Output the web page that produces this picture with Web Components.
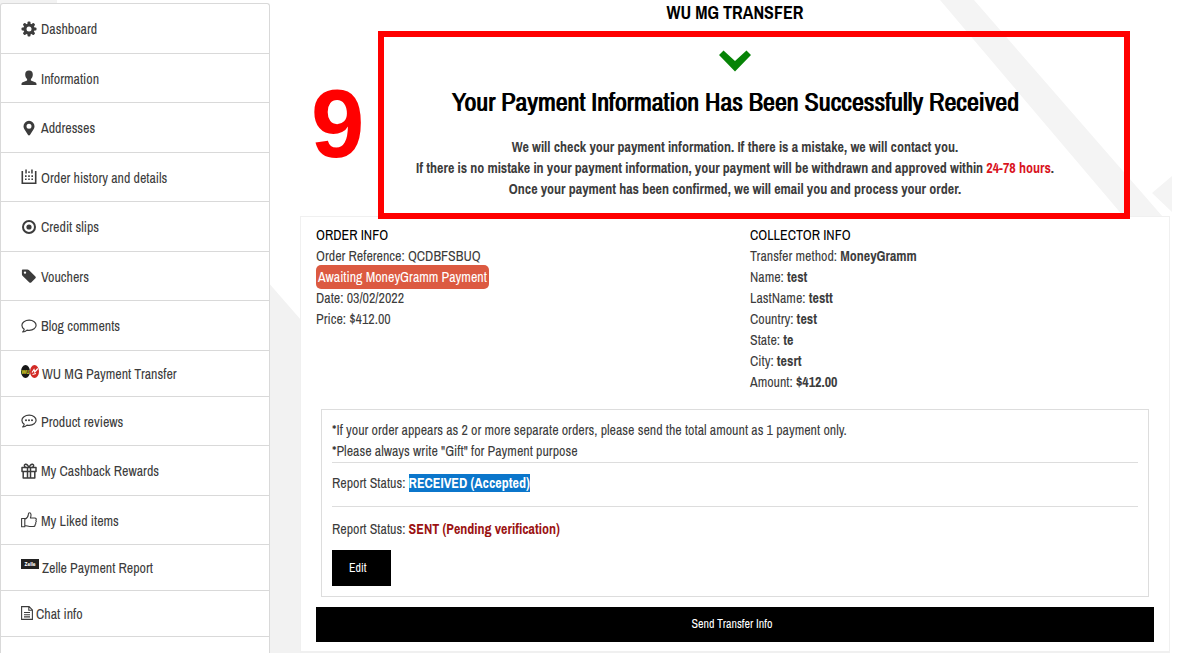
<!DOCTYPE html>
<html lang="en">
<head>
<meta charset="utf-8">
<title>WU MG Transfer</title>
<style>
  html { background: #fff; }
  body {
    margin: 0;
    font: 14px/21px "Archivo Narrow", "Liberation Sans Narrow", "Arial Narrow", "Liberation Sans", sans-serif;
    color: #3c3c3c;
  }
</style>
</head>
<body>
<account-page>
  <account-menu slot="menu">
    <menu-item icon="gear" tall>Dashboard</menu-item>
    <menu-item icon="user">Information</menu-item>
    <menu-item icon="pin" tall>Addresses</menu-item>
    <menu-item icon="calendar">Order history and details</menu-item>
    <menu-item icon="target" tall>Credit slips</menu-item>
    <menu-item icon="tag">Vouchers</menu-item>
    <menu-item icon="bubble" tall>Blog comments</menu-item>
    <menu-item icon="wumg" compact>WU MG Payment Transfer</menu-item>
    <menu-item icon="review">Product reviews</menu-item>
    <menu-item icon="gift" tall>My Cashback Rewards</menu-item>
    <menu-item icon="thumb">My Liked items</menu-item>
    <menu-item icon="zelle" compact>Zelle Payment Report</menu-item>
    <menu-item icon="doc" compact>Chat info</menu-item>
  </account-menu>
  <success-notice step="9">
    <span slot="title">WU MG TRANSFER</span>
    <span slot="heading">Your Payment Information Has Been Successfully Received</span>
  </success-notice>
  <order-panel></order-panel>
</account-page>

<script>
const define = (name, html, setup) => {
  const template = document.createElement('template');
  template.innerHTML = html;
  customElements.define(name, class extends HTMLElement {
    constructor() {
      super();
      this.attachShadow({ mode: 'open' }).append(template.content.cloneNode(true));
    }
    connectedCallback() { if (setup) setup(this, this.shadowRoot); }
  });
};

const teeth = [0, 45, 90, 135].map(a => `<rect x="6.500" y=".5" width="3" height="15" rx="1" transform="rotate(${a} 8 8)"/>`).join('');
const icons = {
  gear: [16, 16, `<mask id="m"><rect width="16" height="16" fill="#fff"/><circle cx="8" cy="8" r="2.500" fill="#000"/></mask><g fill="currentColor" mask="url(#m)"><circle cx="8" cy="8" r="5.600"/>${teeth}</g>`],
  user: [16, 16, `<path fill="currentColor" d="M8 .5c2.500 0 3.800 1.600 3.800 3.900 0 2-.8 3.700-1.900 4.700v1.500l4.300 1.700c.9.400 1.300 1 1.300 1.900V15H.5v-.8c0-.9.400-1.500 1.300-1.900l4.300-1.700V9.100C5 8.100 4.200 6.400 4.200 4.400 4.200 2.100 5.500.5 8 .5z"/>`],
  pin: [16, 16, `<path fill="currentColor" fill-rule="evenodd" d="M8 .8a5.500 5.500 0 0 0-5.500 5.500c0 1 .2 1.700.6 2.500l3.800 6c.5.900 1.700.9 2.200 0l3.800-6c.4-.8.6-1.500.6-2.500A5.500 5.500 0 0 0 8 .8zm0 3a2.500 2.500 0 1 1 0 5 2.500 2.500 0 0 1 0-5z"/>`],
  calendar: [16, 16, `<g fill="currentColor"><path d="M.5 2h1.600v11.400h11.800V2h1.600v13H.5z"/><path d="M4.300.5h1.500v4H4.300zM10.200.5h1.500v4h-1.500z"/><path d="M7 2.500h2v1.300H7zM4 6.300h1.600v1.600H4zM7.200 6.300h1.600v1.600H7.200zM10.400 6.300H12v1.600h-1.600zM4 9.500h1.600v1.600H4zM7.200 9.500h1.600v1.600H7.200zM10.400 9.500H12v1.600h-1.600z"/></g>`],
  target: [16, 16, `<circle cx="8" cy="8" r="6" fill="none" stroke="currentColor" stroke-width="2"/><circle cx="8" cy="8" r="2.600" fill="currentColor"/>`],
  tag: [16, 16, `<path fill="currentColor" fill-rule="evenodd" d="M1.700 1.500h4.700c.6 0 1.200.3 1.700.7l6.300 6.200c.5.500.5 1.300 0 1.800l-4.200 4.200c-.5.500-1.300.5-1.800 0L1.700 8C1.200 7.500.9 7 .9 6.300v-4c0-.5.300-.8.800-.8zM4 3.400a1.200 1.200 0 1 0 0 2.400 1.200 1.200 0 0 0 0-2.400z"/>`],
  bubble: [16, 16, `<path fill="none" stroke="currentColor" stroke-width="1.200" stroke-linejoin="round" d="M8.200 2.200c4 0 6.900 2.200 6.900 5s-2.900 5.100-6.900 5.100c-.8 0-1.500-.1-2.200-.2-1.200 1.100-2.500 1.700-4.300 1.900.9-.9 1.400-1.700 1.500-2.800C1.700 10.200.9 8.800.9 7.200c0-2.800 3.100-5 7.300-5z"/>`],
  review: [16, 16, `<path fill="none" stroke="currentColor" stroke-width="1.200" stroke-linejoin="round" d="M8.200 2.200c4 0 6.900 2.200 6.900 5s-2.900 5.100-6.900 5.100c-.8 0-1.500-.1-2.200-.2-1.200 1.100-2.500 1.700-4.300 1.900.9-.9 1.400-1.700 1.500-2.800C1.700 10.200.9 8.800.9 7.200c0-2.800 3.100-5 7.300-5z"/><g fill="currentColor"><circle cx="5" cy="7.200" r="1"/><circle cx="8" cy="7.200" r="1"/><circle cx="11" cy="7.200" r="1"/></g>`],
  gift: [16, 16, `<g fill="none" stroke="currentColor" stroke-width="1.500" stroke-linejoin="round"><path d="M1 4.500h14v4H1zM2.200 8.500h11.600V15H2.200zM6.500 5v10M9.500 5v10"/><path d="M8 4.500C7 2 5.600.9 4.400 1.200 2.800 1.700 3 4 5 4.500M8 4.500c1-2.500 2.400-3.600 3.600-3.300C13.200 1.700 13 4 11 4.500"/></g>`],
  thumb: [16, 16, `<path fill="none" stroke="currentColor" stroke-width="1.100" stroke-linejoin="round" d="M.6 6.500h3.200v8.200H.6zM3.800 7.300c2-.9 3.300-2.600 3.500-4.400.1-1.300.4-2.300 1.300-2.200 1.500.1 1.900 2.600.8 5.300h4.300c1.600 0 2 1.400 1.200 2.400.6.800.4 1.700-.2 2.200.3.800 0 1.600-.6 2 .2 1.200-.6 1.900-1.700 1.900H8.600c-1.800 0-2.700-.9-4.800-1z"/>`],
  doc: [12, 16, `<path fill="none" stroke="currentColor" stroke-width="1.100" d="M.6 1.600h7.500l3.300 3.300v9.500H.6zM7.800 1.600v3.600h3.600M3 7.500h6M3 9.700h6M3 11.900h6"/>`],
  wumg: [18, 16, `<ellipse cx="4.500" cy="6.500" rx="4.500" ry="6.500" fill="#171717"/><ellipse cx="13.500" cy="6.500" rx="4.500" ry="6.500" fill="#d22a25"/><text x="4.500" y="9" font-size="6" font-weight="700" text-anchor="middle" fill="#e6dc25">WU</text><path d="M11 7.500l2-3 .8 2.500 3-3.500M11.500 9.500l3.500-1" fill="none" stroke="#fff" stroke-width="1.200"/>`],
  zelle: [18, 16, `<path fill="#222" d="M0 0h18v10H0z"/><text x="9" y="7" font-size="6" font-weight="700" text-anchor="middle" fill="#fff">Zelle</text>`]
};

define('menu-item', `
  <style>
    :host { display: block; border-bottom: 1px solid #d9d9d9; }
    a {
      display: flex; align-items: center; gap: 4px;
      box-sizing: border-box; height: 48px; padding: 2px 20px 0;
      color: inherit; text-decoration: none;
    }
    :host([tall]) a { height: 49px; }
    :host([compact]) a { height: 45px; gap: 3px; padding-top: 1px; }
    svg { display: block; flex: none; margin-bottom: 2px; overflow: visible; }
  </style>
  <a href="#"><svg aria-hidden="true"></svg><slot></slot></a>`,
  (host, root) => {
    const [w, h, body] = icons[host.getAttribute('icon')];
    const svg = root.querySelector('svg');
    svg.setAttribute('width', w);
    svg.setAttribute('height', h);
    svg.setAttribute('viewBox', `0 0 ${w} ${h}`);
    svg.innerHTML = body;
  });

define('account-menu', `
  <style>
    :host { display: block; background: #fff; border: 1px solid #d9d9d9; border-bottom: 0; border-radius: 3px 3px 0 0; box-sizing: border-box; }
  </style>
  <nav aria-label="Account"><slot></slot></nav>`);

define('success-notice', `
  <style>
    :host { display: block; position: relative; text-align: center; }
    h1, h2, p { margin: 0; font-weight: 700; }
    h1 { font-size: 18px; line-height: 26px; color: #000; }
    svg { display: block; margin: 24px auto 0; }
    h2 { font-size: 26px; line-height: 30px; margin-top: 15px; color: #000; font-weight: 400; text-shadow: 1px 0 currentColor; }
    p { margin-top: 20px; padding-bottom: 16px; }
    b { color: #d9141e; }
    .frame { position: absolute; inset: 31px 40px -3px 78px; border: 6px solid #f00; z-index: 1; }
    .step { position: absolute; left: 11px; top: 76px; font: 700 96px/96px "Liberation Sans", Arial, sans-serif; color: #f00; }
  </style>
  <h1><slot name="title"></slot></h1>
  <svg width="32" height="22" viewBox="0 0 32 22" aria-hidden="true"><path fill="#078407" d="M4.500.5 16 11 27.500.5 32 5 16 21.500 0 5z"/></svg>
  <h2><slot name="heading"></slot></h2>
  <p>We will check your payment information. If there is a mistake, we will contact you.<br>
  If there is no mistake in your payment information, your payment will be withdrawn and approved within <b>24-78 hours</b>.<br>
  Once your payment has been confirmed, we will email you and process your order.</p>
  <div class="frame"></div>
  <div class="step"></div>`,
  (host, root) => { root.querySelector('.step').textContent = host.getAttribute('step'); });

define('order-panel', `
  <style>
    :host { display: block; background: #fff; border: 1px solid #f0f0f0; border-bottom-width: 2px; padding-top: 8px; }
    .columns { display: grid; grid-template-columns: 1fr 1fr; }
    .columns section { padding: 0 15px; }
    h3 { margin: 0; font: inherit; color: #000; }
    p { margin: 0; }
    .badge { display: inline-block; margin: -2px 0; padding: 2px; line-height: 20px; border-radius: 5px; background: #dc5a41; color: #fff; }
    .report { margin: 16px 20px 10px; padding: 10px; border: 1px solid #ddd; }
    .status { padding: 10px 0 12px; border-top: 1px solid #ddd; }
    .status.last { padding: 12px 0 0; }
    mark { background: #0b76cb; color: #fff; font-weight: 700; }
    .sent { color: #9b1313; }
    button { display: block; border: 0; background: #000; color: #fff; font: 12px/18px "Archivo Narrow", "Liberation Sans Narrow", "Arial Narrow", "Liberation Sans", sans-serif; }
    .edit { margin-top: 10px; padding: 9px 24px 9px 17px; }
    .send { width: calc(100% - 30px); margin: 0 15px 9px; padding: 8px 6px 9px 0; }
  </style>
  <div class="columns">
    <section>
      <h3>ORDER INFO</h3>
      <p>Order Reference: QCDBFSBUQ</p>
      <p><span class="badge">Awaiting MoneyGramm Payment</span></p>
      <p>Date: 03/02/2022</p>
      <p>Price: $412.00</p>
    </section>
    <section>
      <h3>COLLECTOR INFO</h3>
      <p>Transfer method: <b>MoneyGramm</b></p>
      <p>Name: <b>test</b></p>
      <p>LastName: <b>testt</b></p>
      <p>Country: <b>test</b></p>
      <p>State: <b>te</b></p>
      <p>City: <b>tesrt</b></p>
      <p>Amount: <b>$412.00</b></p>
    </section>
  </div>
  <div class="report">
    <p>*If your order appears as 2 or more separate orders, please send the total amount as 1 payment only.</p>
    <p>*Please always write "Gift" for Payment purpose</p>
    <div class="status">Report Status: <mark>RECEIVED (Accepted)</mark></div>
    <div class="status last">Report Status: <b class="sent">SENT (Pending verification)</b>
      <button class="edit" type="button">Edit</button>
    </div>
  </div>
  <button class="send" type="button">Send Transfer Info</button>`);

define('account-page', `
  <style>
    :host { display: grid; grid-template-columns: 270px minmax(0, 1fr); column-gap: 30px; position: relative; padding-right: 7px; }
    .backdrop { position: absolute; left: 0; top: 0; width: 100%; height: 100%; z-index: -1; }
    aside { margin-top: 3px; display: grid; }
  </style>
  <svg class="backdrop" aria-hidden="true">
    <path fill="#f2f2f2" d="M0 0h57v8H0zM240 250l61 70v333h-61z"/>
    <svg x="100%" overflow="visible"><path fill="#f4f4f4" d="M-237 0h34L-14 217h-39zM-25 193l20-17v36z"/></svg>
  </svg>
  <aside><slot name="menu"></slot></aside>
  <main><slot></slot></main>`);
</script>
</body>
</html>
